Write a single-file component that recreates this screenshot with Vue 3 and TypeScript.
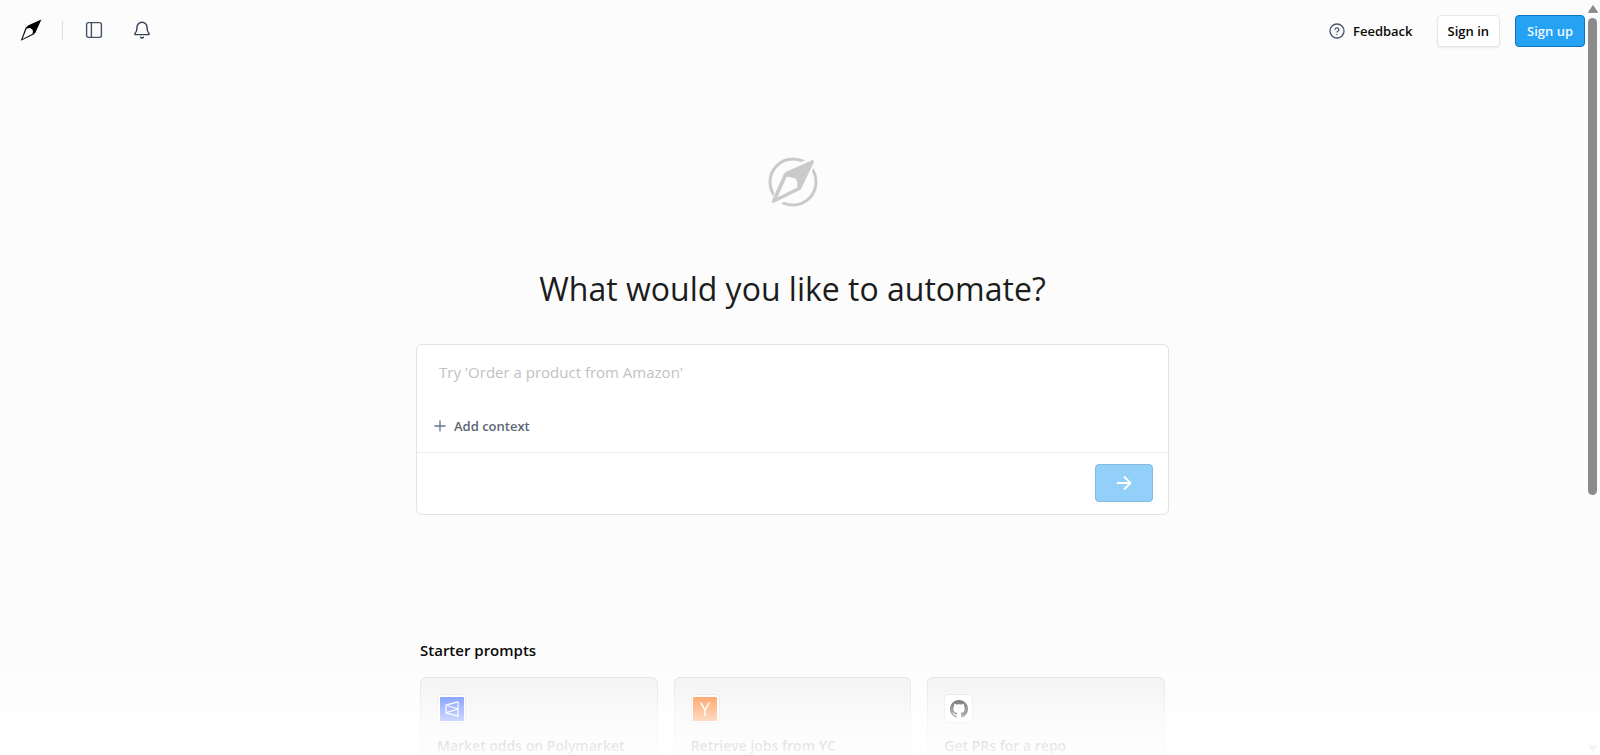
<script setup lang="ts">
import { ref } from 'vue'

interface StarterPrompt {
  id: 'polymarket' | 'yc' | 'github'
  title: string
}

const prompt = ref('')

const starters: StarterPrompt[] = [
  { id: 'polymarket', title: 'Market odds on Polymarket' },
  { id: 'yc', title: 'Retrieve jobs from YC' },
  { id: 'github', title: 'Get PRs for a repo' },
]
</script>

<template>
  <div class="shell">
    <div class="page">
      <header class="topbar">
        <div class="group">
          <a class="logo" href="#" aria-label="Home">
            <svg width="22" height="23" viewBox="0 0 22 23" aria-hidden="true">
              <path d="M21.4.6 8.4 6.2 5.6 8.7.8 21.8 13.6 15.4 15.6 13.2Z" fill="#000" />
              <path d="M6.7 9.4 2.5 20.1 12.6 14.8 13 11.6 10.3 9Z" fill="#fcfcfc" />
            </svg>
          </a>
          <span class="rule"></span>
          <button class="icon-btn" type="button" aria-label="Toggle sidebar">
            <svg width="18" height="18" viewBox="0 0 18 18" fill="none" stroke="#475569" stroke-width="1.4" aria-hidden="true">
              <rect x="1.6" y="1.6" width="14.8" height="14.8" rx="1.8" />
              <path d="M6.4 1.6v14.8" />
            </svg>
          </button>
          <button class="icon-btn" type="button" aria-label="Notifications">
            <svg width="18" height="18" viewBox="0 0 18 18" fill="none" stroke="#334155" stroke-width="1.4" stroke-linecap="round" stroke-linejoin="round" aria-hidden="true">
              <path d="M9 1.2a5 5 0 0 0-5 5c0 3.6-.9 5.2-2 6.3-.5.5-.2 1.1.4 1.1h13.2c.6 0 .9-.6.4-1.1-1.1-1.1-2-2.7-2-6.3a5 5 0 0 0-5-5Z" />
              <path d="M7.6 16.3a1.8 1.8 0 0 0 2.8 0" />
            </svg>
          </button>
        </div>
        <div class="actions">
          <button class="feedback" type="button">
            <svg width="16" height="16" viewBox="0 0 16 16" fill="none" stroke="#475569" stroke-width="1.3" stroke-linecap="round" stroke-linejoin="round" aria-hidden="true">
              <circle cx="8" cy="8" r="7" />
              <path d="M6.1 6.2a1.95 1.95 0 0 1 3.8.5c0 1.3-1.9 1.6-1.9 2.4M8 11.4v.1" />
            </svg>
            Feedback
          </button>
          <button class="btn" type="button">Sign in</button>
          <button class="btn primary" type="button">Sign up</button>
        </div>
      </header>

      <main class="main">
        <svg class="compass" width="50" height="50" viewBox="0 0 50 50" aria-hidden="true">
          <circle cx="25" cy="25" r="23" fill="none" stroke="#cacaca" stroke-width="3" />
          <path d="M50-2 16 12 0 52 36 36Z" fill="#fcfcfc" />
          <path d="M44.5 4.6 18.8 16 17.2 17.7 5.3 44.4 31.6 31.5Z" fill="#cacaca" stroke="#cacaca" stroke-width="3" stroke-linejoin="round" />
          <path d="M18.8 19.4 9.4 40.6 29.4 30.6 29.2 24.8 27.4 21.6Z" fill="#fcfcfc" />
        </svg>
        <h1>What would you like to automate?</h1>

        <form class="composer" @submit.prevent>
          <div class="entry">
            <textarea v-model="prompt" rows="1" aria-label="Task" placeholder="Try 'Order a product from Amazon'"></textarea>
            <button class="context" type="button">
              <svg width="12" height="12" viewBox="0 0 12 12" stroke="#64748b" stroke-width="1.3" aria-hidden="true">
                <path d="M6 .5v11M.5 6h11" />
              </svg>
              Add context
            </button>
          </div>
          <div class="submit-row">
            <button class="send" type="submit" aria-label="Send">
              <svg width="16" height="16" viewBox="0 0 16 16" fill="none" stroke="#fff" stroke-width="1.8" stroke-linecap="round" stroke-linejoin="round" aria-hidden="true">
                <path d="M1.5 8h13M8.5 2l6 6-6 6" />
              </svg>
            </button>
          </div>
        </form>

        <section class="starters">
          <h2>Starter prompts</h2>
          <div class="cards">
            <button v-for="item in starters" :key="item.id" class="card" type="button">
              <span class="tile">
                <svg v-if="item.id === 'polymarket'" width="24" height="24" viewBox="0 0 24 24" aria-hidden="true">
                  <rect width="24" height="24" rx="1" fill="#2e5cff" />
                  <path d="M18 4.8v14.4L6 15.8V8.2ZM6 8.2 18 12 6 15.8" fill="none" stroke="#fff" stroke-width="1.2" stroke-linejoin="round" />
                </svg>
                <svg v-else-if="item.id === 'yc'" width="24" height="24" viewBox="0 0 24 24" aria-hidden="true">
                  <rect width="24" height="24" rx="1" fill="#ff6600" />
                  <path d="M7.7 5.5 12 13.2l4.3-7.7M12 13v6" fill="none" stroke="#fff" stroke-width="1.5" />
                </svg>
                <svg v-else width="18" height="18" viewBox="0 0 16 16" aria-hidden="true">
                  <path fill="#000" d="M8 0C3.58 0 0 3.58 0 8c0 3.54 2.29 6.53 5.47 7.59.4.07.55-.17.55-.38 0-.19-.01-.82-.01-1.49-2.01.37-2.53-.49-2.69-.94-.09-.23-.48-.94-.82-1.13-.28-.15-.68-.52-.01-.53.63-.01 1.08.58 1.23.82.72 1.21 1.87.87 2.33.66.07-.52.28-.87.51-1.07-1.78-.2-3.64-.89-3.64-3.95 0-.87.31-1.59.82-2.15-.08-.2-.36-1.02.08-2.12 0 0 .67-.21 2.2.82.64-.18 1.32-.27 2-.27s1.36.09 2 .27c1.53-1.04 2.2-.82 2.2-.82.44 1.1.16 1.92.08 2.12.51.56.82 1.27.82 2.15 0 3.07-1.87 3.75-3.65 3.95.29.25.54.73.54 1.48 0 1.07-.01 1.93-.01 2.2 0 .21.15.46.55.38A8.01 8.01 0 0 0 16 8c0-4.42-3.58-8-8-8Z" />
                </svg>
              </span>
              <span class="card-title">{{ item.title }}</span>
            </button>
          </div>
        </section>
      </main>
    </div>

    <div class="scrollbar" aria-hidden="true">
      <svg width="10" height="8" viewBox="0 0 10 8"><path d="M5 .6 9.6 7.4H.4Z" fill="#8b8b8b" stroke="#8b8b8b" stroke-linejoin="round" /></svg>
      <div class="track"><div class="thumb"></div></div>
      <svg width="10" height="8" viewBox="0 0 10 8"><path d="M5 7.4.4.6h9.2Z" fill="#8b8b8b" /></svg>
    </div>
    <div class="fade"></div>
  </div>
</template>

<style>
body {
  margin: 0;
  background: #fcfcfc;
}
</style>

<style scoped>
.shell {
  position: relative;
  display: grid;
  grid-template-columns: minmax(0, 1fr) 15px;
  height: 100vh;
  overflow: hidden;
  background: #fcfcfc;
  color: #1c1c1c;
  font-family: "Segoe UI", "Open Sans", "Noto Sans", sans-serif;
}

.page {
  min-width: 0;
  overflow: hidden;
}

button {
  margin: 0;
  padding: 0;
  border: 0;
  background: none;
  color: inherit;
  font: inherit;
  cursor: pointer;
}

svg {
  display: block;
  flex: none;
}

.topbar {
  display: flex;
  align-items: flex-start;
  justify-content: space-between;
  height: 64px;
}

.group {
  display: flex;
  align-items: center;
  height: 60px;
  padding-left: 20px;
}

.rule {
  width: 1px;
  height: 19px;
  margin: 0 22px 0 20px;
  background: #dcdcdc;
}

.icon-btn + .icon-btn {
  margin-left: 30px;
}

.actions {
  display: flex;
  align-items: center;
  padding-top: 15px;
}

.feedback {
  display: flex;
  align-items: center;
  gap: 8px;
  margin-right: 24px;
  color: #0a0a0a;
  font-size: 13px;
  font-weight: 600;
}

.btn {
  box-sizing: border-box;
  height: 32px;
  padding: 0 10px;
  border: 1px solid #e6e6e6;
  border-radius: 4px;
  background: #fff;
  box-shadow: 0 1px 2px rgba(0, 0, 0, 0.08);
  color: #0a0a0a;
  font-size: 13px;
  font-weight: 600;
}

.primary {
  margin-left: 15px;
  padding: 0 11px;
  border-color: #0b76bd;
  background: #26a2f5;
  box-shadow: none;
  color: #f0f9ff;
}

.main {
  display: flex;
  flex-direction: column;
  align-items: center;
  width: 753px;
  max-width: 100%;
  margin: 0 auto;
  padding-top: 93px;
}

h1 {
  margin: 55px 0 29px;
  color: #1c1c1c;
  font-size: 32px;
  font-weight: 400;
  line-height: 53px;
}

.composer {
  box-sizing: border-box;
  width: 100%;
  border: 1px solid #e2e2e2;
  border-radius: 6px;
  background: #fff;
}

.entry {
  display: flex;
  flex-direction: column;
  align-items: flex-start;
  gap: 30px;
  padding: 15px 22px 14px;
  border-bottom: 1px solid #ebebeb;
}

textarea {
  display: block;
  width: 100%;
  height: 24px;
  padding: 0;
  border: 0;
  outline: 0;
  resize: none;
  overflow: hidden;
  background: transparent;
  color: #1c1c1c;
  font: 400 15px/24px "Segoe UI", "Open Sans", "Noto Sans", sans-serif;
}

textarea::placeholder {
  color: #c2c2c2;
  opacity: 1;
}

.context {
  display: flex;
  align-items: center;
  gap: 8px;
  margin-left: -5px;
  color: #5b6676;
  font-size: 13px;
  font-weight: 600;
  line-height: 24px;
}

.submit-row {
  display: flex;
  justify-content: flex-end;
  padding: 11px 15px 12px;
}

.send {
  display: flex;
  align-items: center;
  justify-content: center;
  box-sizing: border-box;
  width: 58px;
  height: 38px;
  border: 1px solid #84b9dc;
  border-radius: 4px;
  background: #92d0fa;
}

.starters {
  box-sizing: border-box;
  width: 100%;
  padding: 123px 4px 0;
}

h2 {
  margin: 0 0 15px;
  color: #0a0a0a;
  font-size: 15px;
  font-weight: 600;
  line-height: 24px;
}

.cards {
  display: grid;
  grid-template-columns: repeat(3, minmax(0, 1fr));
  gap: 16px;
}

.card {
  display: flex;
  flex-direction: column;
  align-items: flex-start;
  gap: 11px;
  min-height: 120px;
  padding: 16px;
  border: 1px solid #dedede;
  border-radius: 6px;
  background: #f1f1f1;
  text-align: left;
}

.tile {
  display: flex;
  align-items: center;
  justify-content: center;
  box-sizing: border-box;
  width: 29px;
  height: 29px;
  border: 1px solid #dcdcdc;
  border-radius: 4px;
  background: #fff;
}

.card-title {
  color: #1c1c1c;
  font-size: 14px;
  font-weight: 600;
  line-height: 24px;
}

.scrollbar {
  display: flex;
  flex-direction: column;
  align-items: center;
  gap: 5px;
  padding: 5px 0 2px;
}

.track {
  flex: 1;
  width: 9px;
}

.thumb {
  height: 66%;
  border-radius: 5px;
  background: #8b8b8b;
}

.fade {
  position: absolute;
  inset: auto 0 0;
  height: 100px;
  background: linear-gradient(to bottom, rgba(255, 255, 255, 0), rgba(255, 255, 255, 0.42) 40%, rgba(255, 255, 255, 0.75) 65%, rgba(255, 255, 255, 0.94));
  pointer-events: none;
}
</style>
